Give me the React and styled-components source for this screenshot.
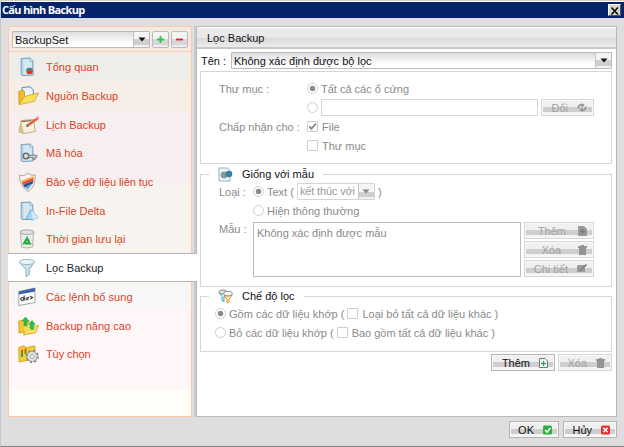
import React from "react";
import styled, { createGlobalStyle } from "styled-components";

const Global = createGlobalStyle`
  * { box-sizing: border-box; }
  body { margin: 0; overflow: hidden; background: #dedede; }
  svg { display: block; flex: none; }
`;

const Window = styled.div`
  width: 624px;
  height: 447px;
  display: flex;
  flex-direction: column;
  background: #dedede;
  border-top: 1px solid #d4d0c8;
  border-left: 1px solid #c8c8c8;
  border-bottom: 1px solid #808080;
  font: 11px/14px "Liberation Sans", Arial, sans-serif;
  color: #111;
  white-space: nowrap;
`;
const TitleBar = styled.header`
  height: 17px;
  flex: none;
  border-top: 1px solid #fff;
  background: #06246b;
  display: flex;
  align-items: center;
  justify-content: space-between;
  padding: 0 3px 0 1px;
  color: #fff;
  font: bold 11px/14px "Open Sans", "Noto Sans", sans-serif;
  letter-spacing: ${(p) => p.$spacing}px;
`;
const CloseButton = styled.button`
  width: 13px;
  height: 12px;
  padding: 1px 0 0 2px;
  border: 1px solid;
  border-color: #fff #555 #555 #fff;
  background: #d8d5ce;
`;
const Body = styled.div`
  display: flex;
  height: 391px;
  margin: 8px 0 0 7px;
`;
const Sidebar = styled.aside`
  width: 184px;
  flex: none;
  border: 1px solid #fcc9ae;
  background: linear-gradient(
    #f5e9e4 0 24px, #fcc9ae 24px 25px, #efede9 25px 54px, #f8eee8 54px 84px,
    #f7eef0 84px 157px, #f7f4ef 157px 258px, #f7f7f8 258px 279px,
    #fff6f7 279px 363px, #fffdf8 363px
  );
`;
const SetRow = styled.div`
  display: flex;
  height: 25px;
  padding: 4px 3px 0;
  gap: 2px;
`;
const Combo = styled.div`
  width: ${(p) => p.$width}px;
  height: 17px;
  flex: none;
  display: flex;
  justify-content: space-between;
  align-items: stretch;
  border: 1px solid ${(p) => (p.$off ? "#d4d4d4" : "#bababa")};
  border-radius: 1px;
  color: ${(p) => (p.$off ? "#999" : "#111")};
  background: ${(p) => (p.$off ? "#fff" : "linear-gradient(#dedcdf, #fff 75%)")};
  padding-left: 2px;
  line-height: ${(p) => p.$line || 15}px;
  letter-spacing: ${(p) => p.$spacing || 0}px;
`;
const ComboArrow = styled.span`
  width: 16px;
  border-left: 1px solid #c4c4c4;
  display: flex;
  align-items: center;
  justify-content: center;
  background: linear-gradient(#f5f5f5 0 50%, #d0ced0 50% 88%, #f2f2f2 88%);
`;
const SmallButton = styled.button`
  width: 17px;
  height: 17px;
  padding: 3px;
  border: 1px solid #bcbcbc;
  border-radius: 2px;
  background: linear-gradient(#f4f4f4 0 50%, #d8d6d8 50% 85%, #eee 85%);
`;
const Nav = styled.nav`
  display: grid;
  grid-template-rows: repeat(11, 28.7px);
`;
const NavItem = styled.a`
  display: flex;
  align-items: center;
  gap: 7px;
  padding: 2px 0 0 9px;
  color: #d9441f;
  letter-spacing: ${(p) => p.$spacing || 0}px;
  ${(p) =>
    p.$selected &&
    `
    color: #222;
    width: 189px;
    margin-left: -1px;
    padding-left: 10px;
    position: relative;
    background: #fff;
    border-top: 1px solid #b8b8b8;
    border-bottom: 1px solid #b8b8b8;
  `}
`;
const Main = styled.main`
  width: 421px;
  margin-left: 4px;
  border: 1px solid #b9b9b9;
  box-shadow: -2px 0 0 #cbcbcb;
  background: #fff;
`;
const MainHeader = styled.h1`
  height: 22px;
  margin: 0;
  padding-left: 10px;
  border-top: 1px solid #fff;
  border-bottom: 2px solid #c8c8c8;
  background: linear-gradient(#eaeaea 0 48%, #dadada 55%, #ececec);
  font-size: 11px;
  font-weight: normal;
  line-height: 20px;
`;
const NameRow = styled.div`
  display: flex;
  align-items: center;
  height: 17px;
  margin: 3px 0 2px 4px;
`;
const Label = styled.span`
  width: ${(p) => p.$width}px;
  flex: none;
`;
const Group = styled.fieldset`
  width: 412px;
  height: ${(p) => p.$height}px;
  margin: ${(p) => p.$top || 0}px 0 0 3px;
  padding: ${(p) => p.$pad};
  min-width: 0;
  border: 1px solid #d6d6d6;
  color: #8a8a8a;
`;
const Legend = styled.legend`
  height: 16px;
  width: ${(p) => p.$width}px;
  margin-left: ${(p) => p.$shift}px;
  padding: 0 0 0 9px;
  display: flex;
  align-items: center;
  gap: 9px;
  color: #111;
`;
const Row = styled.div`
  display: flex;
  align-items: center;
  height: 19px;
  padding-left: ${(p) => p.$indent || 0}px;
  letter-spacing: ${(p) => p.$spacing || 0}px;
`;
const Radio = styled.span`
  width: 11px;
  height: 11px;
  flex: none;
  margin-right: 3px;
  border: 1px solid #cfcfcf;
  border-radius: 50%;
  background: ${(p) => (p.$on ? "radial-gradient(circle, #8b8b8b 0 2.4px, #fff 3.2px)" : "#fff")};
`;
const Check = styled.span`
  width: 11px;
  height: 11px;
  flex: none;
  margin: 0 4px 0 ${(p) => p.$left || 0}px;
  border: 1px solid #cdcdcd;
  border-radius: 1px;
`;
const PathInput = styled.span`
  width: 217px;
  height: 17px;
  margin-right: 3px;
  border: 1px solid #d4d4d4;
  border-radius: 1px;
`;
const Button = styled.button`
  width: ${(p) => p.$width}px;
  height: 17px;
  flex: none;
  display: flex;
  align-items: center;
  justify-content: flex-end;
  gap: ${(p) => p.$gap || 9}px;
  padding: 0 ${(p) => p.$right || 6}px 0 0;
  border: 1px solid ${(p) => (p.$off ? "#d6d6d6" : "#b4b4b4")};
  box-shadow: inset 0 0 0 1px #f8f8f8;
  background: linear-gradient(#f0f0f0 0 48%, #cfcdcf 48% 82%, #f4f4f4 82%);
  color: ${(p) => (p.$off ? "#a2a2a2" : "#111")};
  font: inherit;
  line-height: 14px;
`;
const PatternArea = styled.div`
  display: flex;
  margin-top: 2px;
`;
const PatternList = styled.div`
  width: 268px;
  height: 55px;
  margin-right: 3px;
  padding: 3px;
  border: 1px solid #bdbdbd;
`;
const Stack = styled.div`
  display: grid;
  gap: 2px;
  align-content: start;
`;
const Actions = styled.div`
  display: flex;
  justify-content: flex-end;
  gap: 3px;
  padding: 2px 4px 0 0;
`;
const Footer = styled.footer`
  display: flex;
  justify-content: flex-end;
  gap: 4px;
  padding: 4px 7px 0 0;
`;

const Arrow = ({ color = "#111" }) => (
  <svg width="8" height="5" viewBox="0 0 8 5"><path d="M.5 .5h7L4 4.5z" fill={color} /></svg>
);
const Tick = () => (
  <svg width="9" height="9" viewBox="0 0 9 9"><path d="M1.2 4.2 3.3 6.8 8 1.5" fill="none" stroke="#858585" strokeWidth="1.8" /></svg>
);
const Trash = () => (
  <svg width="9" height="10" viewBox="0 0 9 10"><path d="M0 1h3V0h3v1h3v2H0zM1 3h7v7H1z" fill="#949494" /></svg>
);
const PageAdd = ({ off }) => (
  <svg width="9" height="10" viewBox="0 0 9 10">
    <path d="M.5.5h5.5L8.5 3v6.5h-8z" fill={off ? "#999" : "#f7f7f7"} stroke={off ? "#999" : "#777"} />
    <path d="M4.5 3v5M2 5.5h5" stroke={off ? "#777" : "#2aab50"} strokeWidth="1.3" />
  </svg>
);
const Edit = () => (
  <svg width="10" height="9" viewBox="0 0 10 9"><path d="M1 1h7v7H0V2z" fill="#9b9b9b" /><path d="M3 6.5 9.5.5" stroke="#808080" strokeWidth="1.6" /></svg>
);
const Refresh = () => (
  <svg width="10" height="9" viewBox="0 0 10 9">
    <path d="M1.4 5.5C.8 3 2.5 1.6 5.4 1.8M8.6 3.5C9.2 6 7.5 7.4 4.6 7.2" fill="none" stroke="#8f8f8f" strokeWidth="1.6" />
    <path d="M4.5 0 7.8 2.2 4.5 4.5zM5.5 4.5 2.2 6.8 5.5 9z" fill="#8f8f8f" />
  </svg>
);
const Badge = ({ color, d }) => (
  <svg width="9" height="10" viewBox="0 0 9 10"><rect y=".5" width="9" height="9" rx="1.5" fill={color} /><path d={d} fill="none" stroke="#fff" strokeWidth="1.6" /></svg>
);

const Sheet = () => (
  <>
    <path d="M3.2 1.5 12 1l2.8 2.5.4 14.4-10.4.8-1.6-1z" fill="#b4d6e8" stroke="#6f9ab4" strokeWidth=".9" />
    <path d="M5.2 2.6 11.5 2l2.3 2.5.3 12.5-8.4.7z" fill="#d3e8f2" />
    <path d="M11.8 1.2v3l3 .3" fill="#f4fafd" stroke="#6f9ab4" strokeWidth=".7" />
  </>
);
const drawings = {
  overview: <><Sheet /><circle cx="11.5" cy="14" r="3.2" fill="#d9381e" /><path d="M11.5 14v-3.3a3.2 3.2 0 0 0-3.2 3.3z" fill="#3b9a54" /><path d="M11.5 14v-3.3a3.2 3.2 0 0 1 3.2 3.3z" fill="#5577a8" /></>,
  source: <>
    <path d="M4 1.5 12 .8l3.3 3v11L5 16z" fill="#eaf5fb" stroke="#4f8fb4" />
    <path d="M.8 5.5 5 4l1.5 2v10.5L1 18z" fill="#f1bd2d" stroke="#c6922a" strokeWidth=".8" />
    <path d="M6.5 10.5 20.5 7l-4 8.3L1.2 18.7z" fill="#fbe05c" stroke="#d3a02b" strokeWidth=".8" />
  </>,
  schedule: <>
    <path d="M3 5.5 15.5 4.5l1.7 12L6 18.5l-5-1.3z" fill="#f7f0dd" stroke="#b3a17d" strokeWidth=".9" />
    <path d="M3 5.5 1 17.2l5 1.3z" fill="#d8bf8c" /><path d="M3.5 6 13 5l.6 1L4 7.2z" fill="#8b6749" />
    <path d="M9.5 10.5 20 3" stroke="#e0603f" strokeWidth="2.4" /><path d="m8 11.8 1-2.3 1.6 1.8z" fill="#333" /><circle cx="20" cy="2.8" r="1.6" fill="#f49a8a" />
  </>,
  encrypt: <><Sheet /><circle cx="8" cy="13" r="2.8" fill="#ddd" stroke="#6c6c6c" strokeWidth="1.5" /><path d="M10.8 12.2h8v2.4h-1.6v1.8h-2v-1.8h-4.4z" fill="#ccc" stroke="#6c6c6c" strokeWidth=".8" /></>,
  shield: <>
    <path d="M1.5 3C5 4.5 8 3 10 1c2 2 4.5 2.5 7 2 .6 8-1.5 13-7 16.4C4.5 16 1.5 10.5 1.5 3z" fill="#f3f3f3" stroke="#b3a597" />
    <path d="M3.4 8.5 15.5 4v1.8L3.8 10.6z" fill="#f6b45e" /><path d="M3.8 10.6 15.5 5.8v2.6L5 13z" fill="#e45324" /><path d="M5 13 15.5 8.4l-.8 3L6.7 15.4z" fill="#254f93" /><path d="M6.7 15.4 14.7 11.4 10 17.5z" fill="#63a8d8" />
  </>,
  delta: <><Sheet /><path d="m13 8.5 7 8-5 2.5-6.8-1z" fill="#a9d6f3" stroke="#5aa2d0" strokeWidth=".9" /><path d="m13 8.5 2 10.4 5-2.4z" fill="#d3edfb" /></>,
  retain: <>
    <path d="M2.5 3.5h13L14.5 18q-5.5 2-11 0z" fill="#eceeee" stroke="#a8abab" strokeWidth=".9" /><ellipse cx="9" cy="3.2" rx="7" ry="2.3" fill="#dfe2e2" stroke="#9b9e9e" strokeWidth=".9" />
    <path d="m9 9.2 2.9 5.2H6.1z" fill="none" stroke="#22a839" strokeWidth="2.2" strokeDasharray="5 .8" />
  </>,
  filter: <>
    <path d="M1.5 4.5 8 11.5v7l3.3-1.8v-5.2l5-7z" fill="#cfe4ea" stroke="#79aab8" strokeWidth=".9" /><ellipse cx="9" cy="4" rx="7.5" ry="2.6" fill="#e8f4f7" stroke="#8ab7c3" strokeWidth=".9" />
  </>,
  command: <>
    <path d="M.8 4.5 17 1v14.5L.8 18.5z" fill="#fafafa" stroke="#9c9c9c" strokeWidth=".9" /><path d="M.8 4.5 17 1v3.4L.8 7.6z" fill="#3663b0" />
    <circle cx="4.3" cy="12" r="1.5" fill="none" stroke="#333" strokeWidth="1.2" /><path d="M6.2 8.5v5M8.2 10.5v2.8M9.8 13.2v-2.5l1.6-.4M12.3 9.2l2.2 1.3-2.2 1.6" fill="none" stroke="#333" strokeWidth="1.1" />
  </>,
  advanced: <>
    <path d="M.8 5 5 4l2 1.5 4-1v11L1 17z" fill="#f3c52f" stroke="#c99a26" strokeWidth=".8" /><path d="m8 12 12.5-2.5-3 7.3L5.5 19z" fill="#fbe161" stroke="#c99a26" strokeWidth=".8" /><path d="M6 7h5v7l-5 2z" fill="#f7d849" />
    <path d="m7.5 1 3.2 3.8H9v5H6v-5H4.3zM14 4.5l3.2 3.8h-1.7v5h-3v-5h-1.7z" fill="#1fc54e" stroke="#15953b" strokeWidth=".5" />
  </>,
  options: <>
    <path d="M.8 3.5 6 1.8l2 1.7 9-1.5v13L1 18z" fill="#f5cc35" stroke="#c99a26" strokeWidth=".8" /><path d="M4 5.5v4M7.5 4.5v3" stroke="#e34a21" strokeWidth="1.8" /><path d="M4 9v4M7.5 7v3" stroke="#2d9c42" strokeWidth="1.8" />
    <circle cx="14.2" cy="12.5" r="5.6" fill="none" stroke="#8c8c8c" strokeWidth="2.2" strokeDasharray="2.2 2.2" /><circle cx="14.2" cy="12.5" r="3.8" fill="#fff" stroke="#8c8c8c" strokeWidth="3" /><circle cx="14.2" cy="12.5" r="3.7" fill="#fff" stroke="#dedede" strokeWidth="2" /><circle cx="14.2" cy="12.5" r="2.1" fill="#fff" stroke="#888" strokeWidth=".8" />
  </>,
};
const NavIcon = ({ name }) => <svg width="21" height="20" viewBox="0 0 21 20">{drawings[name]}</svg>;

const MatchIcon = () => (
  <svg width="15" height="15" viewBox="0 0 15 15"><path d="M1 1h8.5L12 3.5V14H1z" fill="#eef7fa" stroke="#89b4c4" /><circle cx="6" cy="8" r="3.4" fill="#8798a1" /><circle cx="11" cy="7" r="3.3" fill="#367fa5" /></svg>
);
const ModeIcon = () => (
  <svg width="15" height="15" viewBox="0 0 15 15">
    <path d="M1.5 4 4 7.5v4l2 1V8l2-3.5z" fill="#dff3f9" stroke="#39a4cb" strokeWidth="1" />
    <path d="M6 7l3 3v4l2-1v-3l3-3.5z" fill="#fff0b8" stroke="#ef8c2f" strokeWidth="1" />
    <ellipse cx="4.8" cy="3" rx="4" ry="2" fill="#e5e5e5" stroke="#777" strokeWidth=".8" /><ellipse cx="10" cy="4.6" rx="4.3" ry="2.3" fill="#f2f2f2" stroke="#777" strokeWidth=".8" />
  </svg>
);

const items = [
  ["overview", "Tổng quan"],
  ["source", "Nguồn Backup"],
  ["schedule", "Lịch Backup"],
  ["encrypt", "Mã hóa"],
  ["shield", "Bảo vệ dữ liệu liên tục", -0.07],
  ["delta", "In-File Delta"],
  ["retain", "Thời gian lưu lại"],
  ["filter", "Lọc Backup"],
  ["command", "Các lệnh bổ sung", 0.06],
  ["advanced", "Backup nâng cao"],
  ["options", "Tùy chọn", -0.1],
];

export default function App() {
  return (
    <Window>
      <Global />
      <TitleBar $spacing={-0.65}>
        Cấu hình Backup
        <CloseButton aria-label="Close">
          <svg width="8" height="8" viewBox="0 0 8 8"><path d="m.5.5 6.5 7M7 .5l-6.5 7" stroke="#111" strokeWidth="1.6" /></svg>
        </CloseButton>
      </TitleBar>
      <Body>
        <Sidebar>
          <SetRow>
            <Combo $width={138} $line={17}>BackupSet<ComboArrow><Arrow /></ComboArrow></Combo>
            <SmallButton aria-label="Add"><svg width="9" height="9" viewBox="0 0 9 9"><path d="M4.5 1v7M1 4.5h7" stroke="#2fc64c" strokeWidth="1.8" /></svg></SmallButton>
            <SmallButton aria-label="Remove"><svg width="9" height="9" viewBox="0 0 9 9"><path d="M1 4.5h7" stroke="#ee1c2c" strokeWidth="1.8" /></svg></SmallButton>
          </SetRow>
          <Nav>
            {items.map(([icon, text, spacing]) => (
              <NavItem key={icon} $spacing={spacing} $selected={icon === "filter"}><NavIcon name={icon} />{text}</NavItem>
            ))}
          </Nav>
        </Sidebar>
        <Main>
          <MainHeader>Lọc Backup</MainHeader>
          <NameRow>
            <Label $width={30}>Tên :</Label>
            <Combo $width={381} $line={16}>Không xác định được bộ lọc<ComboArrow><Arrow /></ComboArrow></Combo>
          </NameRow>
          <Group $height={93} $pad="7px 0 0 18px">
            <Row><Label $width={88}>Thư mục :</Label><Radio $on />Tất cả các ổ cứng</Row>
            <Row $indent={88}><Radio /><PathInput /><Button $off $width={53}>Đổi<Refresh /></Button></Row>
            <Row><Label $width={88}>Chấp nhận cho :</Label><Check><Tick /></Check>File</Row>
            <Row $indent={88}><Check />Thư mục</Row>
          </Group>
          <Group $height={121} $top={2} $pad="0 0 0 18px">
            <Legend $width={114} $shift={-10}><MatchIcon />Giống với mẫu</Legend>
            <Row><Label $width={34}>Loại :</Label><Radio $on />Text (&nbsp;<Combo $off $width={78} $spacing={-0.15}>kết thúc với<ComboArrow><Arrow color="#888" /></ComboArrow></Combo>&nbsp;)</Row>
            <Row $indent={34}><Radio />Hiện thông thường</Row>
            <PatternArea>
              <Label $width={34}>Mẫu :</Label>
              <PatternList>Không xác định được mẫu</PatternList>
              <Stack>
                <Button $off $width={70} $gap={12}>Thêm<PageAdd off /></Button>
                <Button $off $width={70} $gap={17}>Xóa<Trash /></Button>
                <Button $off $width={70}>Chi tiết<Edit /></Button>
              </Stack>
            </PatternArea>
          </Group>
          <Group $height={64} $top={1} $pad="0 0 0 14px">
            <Legend $width={95} $shift={-6}><ModeIcon />Chế độ lọc</Legend>
            <Row><Radio $on />Gồm các dữ liệu khớp (<Check $left={3} />Loại bỏ tất cả dữ liệu khác )</Row>
            <Row $spacing={-0.02}><Radio />Bỏ các dữ liệu khớp (<Check $left={3} />Bao gồm tất cả dữ liệu khác )</Row>
          </Group>
          <Actions>
            <Button $width={64}>Thêm<PageAdd /></Button>
            <Button $off $width={54}>Xóa<Trash /></Button>
          </Actions>
        </Main>
      </Body>
      <Footer>
        <Button $width={50}>OK<Badge color="#32ad43" d="m2 5 2 2 3.5-4" /></Button>
        <Button $width={54}>Hủy<Badge color="#e52b34" d="m2.3 2.8 4.4 4.4m0-4.4L2.3 7.2" /></Button>
      </Footer>
    </Window>
  );
}
